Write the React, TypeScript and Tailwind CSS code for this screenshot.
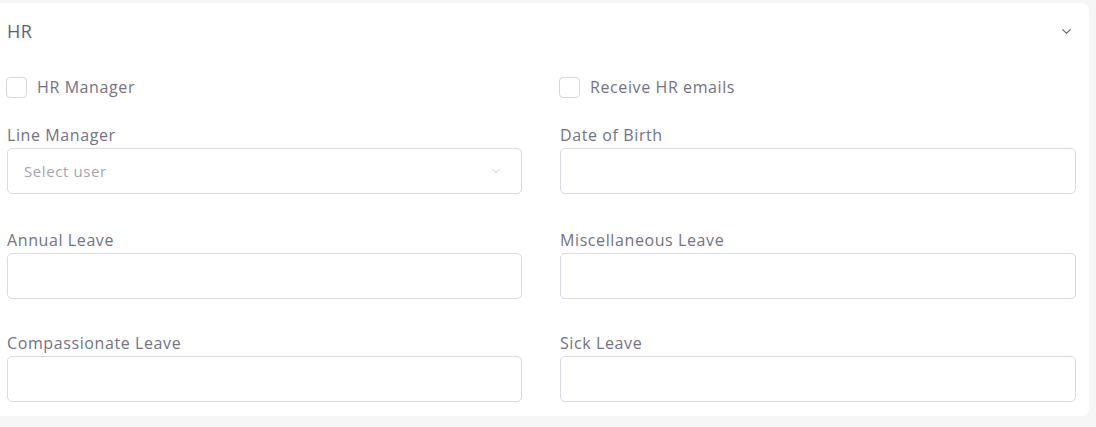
import { ChevronDown } from "lucide-react";

function Field({ label, select }: { label: string; select?: boolean }) {
  return (
    <div className="flex flex-col">
      <label className="text-[16px] leading-[20px] tracking-[0.6px] text-[#737385] mb-[3px]">{label}</label>
      {select ? (
        <div className="h-[46px] border border-[#dadae4] rounded-[5px] bg-white flex items-center justify-between pl-4 pr-[19px]">
          <span className="text-[15px] tracking-[0.6px] text-[#a5a5b0]">Select user</span>
          <ChevronDown className="w-[12px] h-[12px] text-[#c6c6d0]" strokeWidth={1.5} />
        </div>
      ) : (
        <input className="h-[46px] border border-[#dadae4] rounded-[5px] bg-white outline-none px-4" />
      )}
    </div>
  );
}

function Check({ label }: { label: string }) {
  return (
    <label className="flex items-center gap-[10px] text-[16px] tracking-[0.6px] text-[#737385]">
      <span className="w-[21px] h-[21px] border border-[#d6d6df] rounded-[4px] bg-white" />
      {label}
    </label>
  );
}

export default function App() {
  return (
    <div className="min-h-screen bg-[#f6f6f6] pt-[3px] font-['Open_Sans',sans-serif]">
      <div className="bg-white w-[1089px] h-[413px] rounded-tr-[8px] rounded-br-[8px] pl-[7px] pr-[13px]">
        <div className="flex items-center justify-between h-[56px]">
          <h2 className="text-[18px] tracking-[0.6px] text-[#626273]">HR</h2>
          <ChevronDown className="w-[15px] h-[15px] text-[#6b6b7b] mr-[2px]" strokeWidth={2} />
        </div>
        <div className="grid grid-cols-[515px_516px] gap-x-[38px]">
          <div className="pt-[16px] h-[66px] -ml-[1px]">
            <Check label="HR Manager" />
          </div>
          <div className="pt-[16px] h-[66px] -ml-[1px]">
            <Check label="Receive HR emails" />
          </div>
          <Field label="Line Manager" select />
          <Field label="Date of Birth" />
          <div className="col-span-2 h-[36px]" />
          <Field label="Annual Leave" />
          <Field label="Miscellaneous Leave" />
          <div className="col-span-2 h-[34px]" />
          <Field label="Compassionate Leave" />
          <Field label="Sick Leave" />
        </div>
      </div>
    </div>
  );
}
